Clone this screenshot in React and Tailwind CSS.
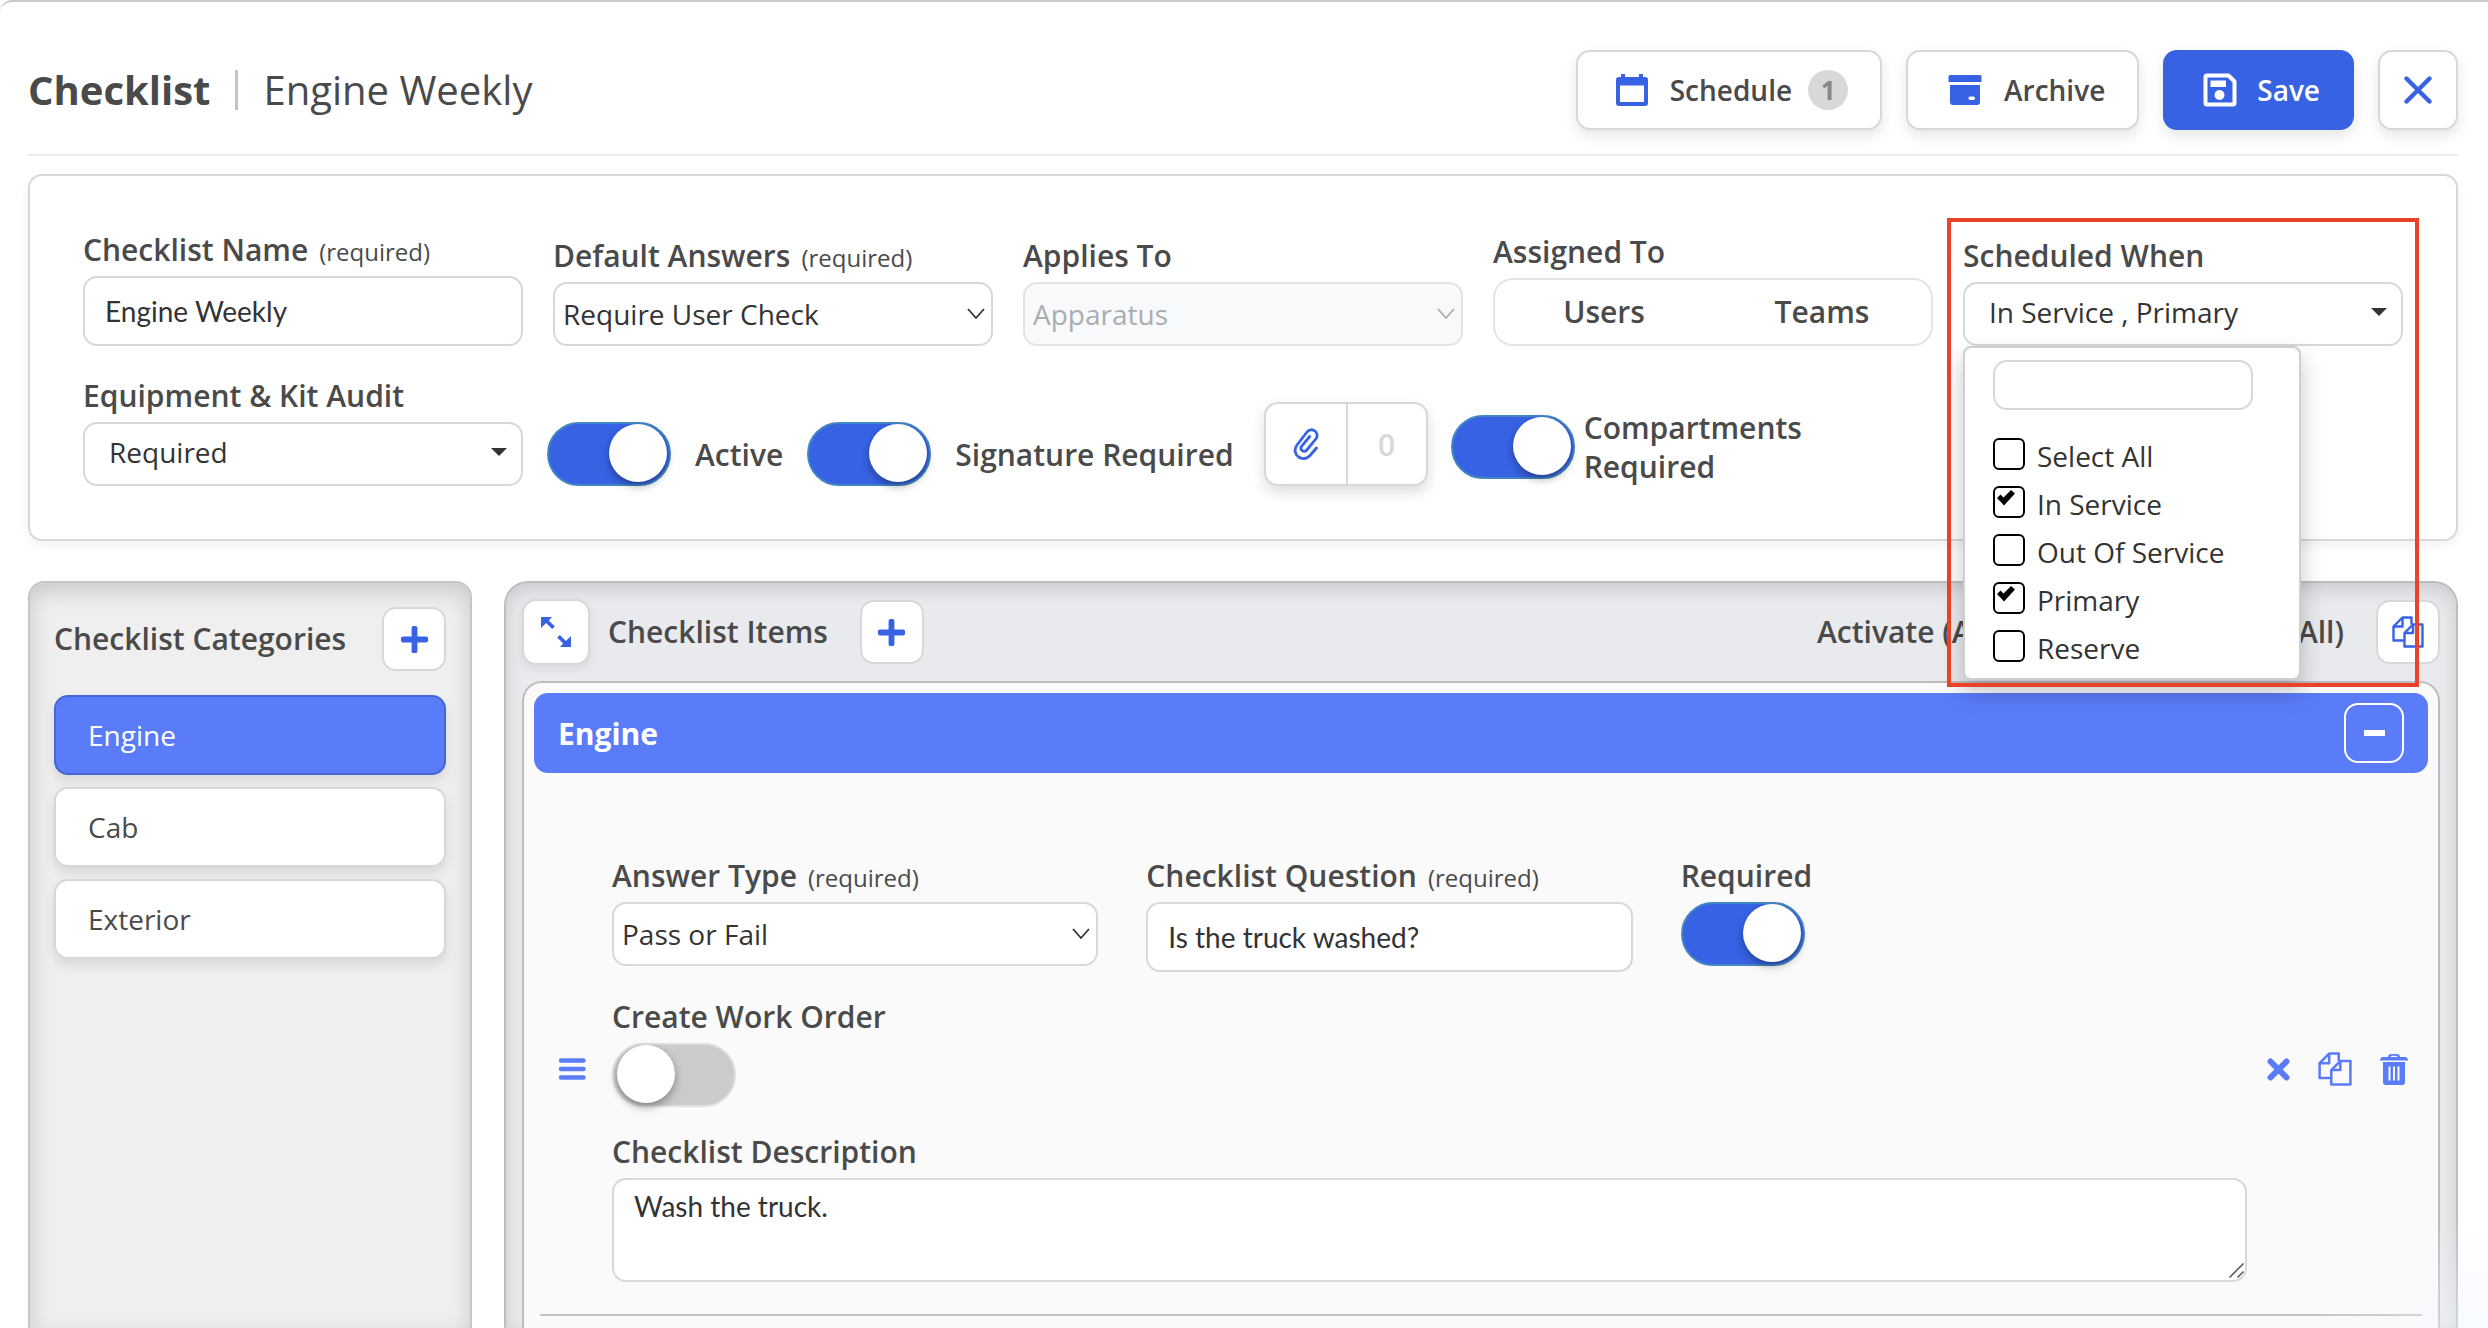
import React, { useState } from "react";
import { FaPlus } from "react-icons/fa";

const labelText = "text-[30px] leading-10 font-semibold text-[#4a4a4a]";
const control = "w-full rounded-[14px] border-2 border-[#d8d8d8] bg-white text-[#333]";

function CalendarIcon() {
  return (
    <svg viewBox="0 0 32 32" className="size-8 text-[#3762e4]" aria-hidden="true">
      <path fill="currentColor" fillRule="evenodd" d="M5 0h4v3h14V0h4v3h2a3 3 0 0 1 3 3v23a3 3 0 0 1-3 3H3a3 3 0 0 1-3-3V6a3 3 0 0 1 3-3h2zM4 11.500v16.500h24V11.500z" />
    </svg>
  );
}

function ArchiveIcon() {
  return (
    <svg viewBox="0 0 34 32" className="h-8 w-[34px] text-[#3762e4]" aria-hidden="true">
      <path fill="currentColor" d="M2 1h30a1.500 1.500 0 0 1 1.500 1.500V8H.5V2.500A1.500 1.500 0 0 1 2 1z" />
      <path fill="currentColor" d="M2 11h30v17a3 3 0 0 1-3 3H5a3 3 0 0 1-3-3z" />
      <rect x="20.500" y="22.500" width="6.500" height="3.500" rx="1.700" fill="white" />
    </svg>
  );
}

function SaveIcon() {
  return (
    <svg viewBox="0 0 34 34" className="size-[34px] text-white" fill="none" aria-hidden="true">
      <path stroke="currentColor" strokeWidth="4" strokeLinejoin="round" d="M2.500 4a1.500 1.500 0 0 1 1.500-1.500h21.500l6 6V30a1.500 1.500 0 0 1-1.500 1.500H4A1.500 1.500 0 0 1 2.500 30z" />
      <path fill="currentColor" d="M7.500 7.500h15.500v6.500H7.500z" />
      <circle cx="16.500" cy="22" r="5" fill="currentColor" />
    </svg>
  );
}

function CloseIcon() {
  return (
    <svg viewBox="0 0 28 28" className="size-7 text-[#3762e4]" fill="none" aria-hidden="true">
      <path stroke="currentColor" strokeWidth="4.400" strokeLinecap="round" d="M2.500 2.500l23 23M25.500 2.500l-23 23" />
    </svg>
  );
}

function RemoveIcon() {
  return (
    <svg viewBox="0 0 23 23" className="size-[23px]" fill="none" aria-hidden="true">
      <path stroke="currentColor" strokeWidth="6" strokeLinecap="round" d="M3.500 3.500l16 16M19.500 3.500l-16 16" />
    </svg>
  );
}

function ClipIcon() {
  return (
    <svg viewBox="0 0 26 32" className="h-8 w-[26px] text-[#3762e4]" fill="none" aria-hidden="true">
      <path
        stroke="currentColor"
        strokeWidth="2.800"
        strokeLinecap="round"
        strokeLinejoin="round"
        d="M23.500 20 17 27.500c-3 3.500-8 4-11.500 1.500-4-3-4.500-8-1.500-12L14 4c2-2.600 5.500-3 8-1s2.800 5.500.8 8l-9 11c-1.200 1.500-3.200 1.700-4.600.6s-1.600-3-.5-4.500l8-9.600"
      />
    </svg>
  );
}

function CopyIcon({ className }) {
  return (
    <svg viewBox="0 0 32 32" className={className} fill="none" stroke="currentColor" strokeWidth="2.400" strokeLinejoin="round" aria-hidden="true">
      <path d="M12 24.500H1.500V10.500L10.500 1.500H19.500v7" />
      <path d="M10.500 1.500V10.500H1.500" />
      <path d="M12.500 17 21 8.500h9.500v22h-18z" />
      <path d="M21 8.500V17h-8.500" />
    </svg>
  );
}

function TrashIcon() {
  return (
    <svg viewBox="0 0 28 32" className="h-8 w-7" aria-hidden="true">
      <path fill="currentColor" fillRule="evenodd" d="M8 4A3 3 0 0 1 10.500 1h7A3 3 0 0 1 20 4h5.500q2.500.5 2.500 3.500H0Q0 4.500 2.500 4zm2.500 0h7l-.8-1.200h-5.400zM3 9h22v20a3 3 0 0 1-3 3H6a3 3 0 0 1-3-3zM8.500 13.500v14h2v-14zm4.500 0v14h2v-14zm4.500 0v14h2v-14z" />
    </svg>
  );
}

function ExpandIcon() {
  return (
    <svg viewBox="0 0 32 32" className="size-8 text-[#3762e4]" aria-hidden="true">
      <path fill="currentColor" d="M1 1h11L8.800 4.400l6 6-2.600 2.600-6.100-6L1 12zM31 31H20l3.200-3.400-6-6 2.600-2.600 6.100 6L31 20z" />
    </svg>
  );
}

function MenuIcon() {
  return (
    <svg viewBox="0 0 28 22" className="h-[22px] w-7" fill="none" aria-hidden="true">
      <path stroke="currentColor" strokeWidth="4.400" strokeLinecap="round" d="M3 2.500h22.500M3 11h22.500M3 19.500h22.500" />
    </svg>
  );
}

function Chevron() {
  return (
    <svg viewBox="0 0 18 14" className="pointer-events-none absolute top-[25px] right-2 h-3.5 w-[18px]" fill="none" aria-hidden="true">
      <path stroke="currentColor" strokeWidth="1.800" d="M1 2l8 9 8-9" />
    </svg>
  );
}

function Caret() {
  return (
    <svg viewBox="0 0 16 8" className="pointer-events-none absolute top-[26px] right-4 h-2 w-4 text-[#333]" aria-hidden="true">
      <path fill="currentColor" d="M0 0h16L8 8z" />
    </svg>
  );
}

function FieldLabel({ htmlFor, required, children }) {
  return (
    <label htmlFor={htmlFor} className={labelText + " mb-1.5 block whitespace-nowrap"}>
      {children}
      {required && <span className="ml-[11px] text-2xl font-normal">(required)</span>}
    </label>
  );
}

function Select({ id, value, disabled }) {
  return (
    <div className={disabled ? "relative text-[#a9adb1]" : "relative text-[#333]"}>
      <select
        id={id}
        disabled={disabled}
        className="h-16 w-full appearance-none rounded-[14px] border-2 border-[#d8d8d8] bg-white pl-2 text-[28px] text-inherit opacity-100 disabled:border-[#e3e3e3] disabled:bg-[#f8f9fb]"
      >
        <option>{value}</option>
      </select>
      <Chevron />
    </div>
  );
}

function Toggle({ id, defaultChecked }) {
  return (
    <input
      id={id}
      type="checkbox"
      role="switch"
      defaultChecked={defaultChecked}
      className="h-16 w-[124px] shrink-0 appearance-none rounded-full border-2 border-[#dedede] bg-[#cbcbcb] before:block before:size-[58px] before:translate-x-[3px] before:rounded-full before:bg-white before:shadow-[0_4px_8px_rgba(0,0,0,0.35)] checked:border-[#4286c5] checked:bg-[#3762e4] checked:before:translate-x-[60px]"
    />
  );
}

const whiteButton =
  "flex shrink-0 items-center justify-center rounded-[14px] border-2 border-[#d8d8d8] bg-white";
const headerShadow = "shadow-[0_6px_14px_rgba(0,0,0,0.10)]";

function Header() {
  return (
    <header className="flex items-center justify-between border-b-2 border-[#ebebeb] pt-12 pb-6">
      <h1 className="flex items-center text-[40px] leading-[54px] text-[#4a4a4a]">
        <span className="font-bold">Checklist</span>
        <span className="mx-[25px] h-10 w-[3px] bg-[#c4c4c4]" />
        <span>Engine Weekly</span>
      </h1>
      <div className="flex gap-6">
        <button className={whiteButton + " " + headerShadow + " h-20 pr-8 pl-[38px] text-[28px] font-semibold text-[#4a4a4a]"}>
          <CalendarIcon />
          <span className="ml-[22px]">Schedule</span>
          <span className="ml-4 flex size-10 items-center justify-center rounded-full bg-[#d8d8d8] text-[26px] font-bold text-[#888]">1</span>
        </button>
        <button className={whiteButton + " " + headerShadow + " h-20 pr-8 pl-10 text-[28px] font-semibold text-[#4a4a4a]"}>
          <ArchiveIcon />
          <span className="ml-[22px]">Archive</span>
        </button>
        <button className={headerShadow + " flex h-20 items-center rounded-[14px] bg-[#3762e4] pr-[34px] pl-10 text-[28px] font-semibold text-white"}>
          <SaveIcon />
          <span className="ml-5">Save</span>
        </button>
        <button aria-label="Close" className={whiteButton + " " + headerShadow + " size-20"}>
          <CloseIcon />
        </button>
      </div>
    </header>
  );
}

const statuses = [
  ["Select All", false],
  ["In Service", true],
  ["Out Of Service", false],
  ["Primary", true],
  ["Reserve", false],
];

function StatusMenu() {
  return (
    <div className="absolute top-full left-0 z-20 w-[338px] rounded-lg border-2 border-[#cfcfcf] bg-white px-7 pt-3 pb-2 shadow-[0_12px_24px_rgba(0,0,0,0.22)]">
      <input type="text" aria-label="Filter statuses" className="mb-5 block h-[50px] w-[260px] rounded-[14px] border-2 border-[#d8d8d8] px-3 text-[28px]" />
      {statuses.map(([name, checked]) => (
        <label key={name} className="flex h-12 items-center text-[28px] text-[#333]">
          <span className="relative mr-3 block size-8">
            <input type="checkbox" defaultChecked={checked} className="peer block size-8 appearance-none rounded-md border-2 border-black bg-white" />
            <svg viewBox="0 0 18 16" className="absolute top-1 left-1 hidden h-4 w-[18px] peer-checked:block" aria-hidden="true">
              <path fill="black" d="M0 8l3.500-3.500 3 3L14 0l4 3.500L7 15.500z" />
            </svg>
          </span>
          <span className="pt-1">{name}</span>
        </label>
      ))}
    </div>
  );
}

function Settings() {
  return (
    <section className="mt-[18px] rounded-[14px] border-2 border-[#d8d8d8] px-[53px] pt-[54px] pb-[53px] shadow-[0_4px_12px_rgba(0,0,0,0.06)]">
      <div className="grid grid-cols-5 items-end gap-[30px]">
        <div>
          <FieldLabel htmlFor="name" required>Checklist Name</FieldLabel>
          <input id="name" defaultValue="Engine Weekly" className={control + " h-[70px] px-5 font-['Lato',sans-serif] text-[28px]"} />
        </div>
        <div>
          <FieldLabel htmlFor="answers" required>Default Answers</FieldLabel>
          <Select id="answers" value="Require User Check" />
        </div>
        <div>
          <FieldLabel htmlFor="applies">Applies To</FieldLabel>
          <Select id="applies" value="Apparatus" disabled />
        </div>
        <div>
          <div className={labelText + " mb-1.5"}>Assigned To</div>
          <div className="grid h-[68px] grid-cols-2 rounded-[20px] border-2 border-[#e4e4e4] pb-0.5 text-[30px] font-semibold text-[#4a4a4a]">
            <button>Users</button>
            <button>Teams</button>
          </div>
        </div>
        <div className="relative">
          <FieldLabel htmlFor="when">Scheduled When</FieldLabel>
          <div className="relative">
            <button id="when" className={control + " h-16 pb-1 pl-6 text-left text-[28px]"}>In Service , Primary</button>
            <Caret />
            <StatusMenu />
          </div>
          <div className="pointer-events-none absolute -top-[18px] -right-4 z-30 h-[469px] w-[472px] border-4 border-[#ea4228]" />
        </div>
      </div>
      <div className="mt-[30px] flex items-end">
        <div className="w-[440px]">
          <FieldLabel htmlFor="audit">Equipment &amp; Kit Audit</FieldLabel>
          <div className="relative">
            <select id="audit" className={control + " h-16 appearance-none pb-1 pl-6 text-[28px]"}>
              <option>Required</option>
            </select>
            <Caret />
          </div>
        </div>
        <div className="ml-6 flex items-center gap-6">
          <Toggle id="active" defaultChecked />
          <label htmlFor="active" className={labelText + " pt-0.5"}>Active</label>
          <Toggle id="signature" defaultChecked />
          <label htmlFor="signature" className={labelText + " pt-0.5"}>Signature Required</label>
        </div>
        <div className="ml-[30px] flex h-[84px] rounded-[14px] border-2 border-[#d8d8d8] bg-white shadow-[0_6px_14px_rgba(0,0,0,0.14)]">
          <button aria-label="Attachments" className="flex w-[82px] items-center justify-center border-r-2 border-[#d8d8d8]">
            <ClipIcon />
          </button>
          <span className="flex w-[78px] items-center justify-center text-[30px] font-semibold text-[#d8d8d8]">0</span>
        </div>
        <div className="ml-[23px] flex items-center gap-[9px]">
          <Toggle id="compartments" defaultChecked />
          <label htmlFor="compartments" className="w-[240px] text-[30px] leading-[39px] font-semibold text-[#4a4a4a]">Compartments Required</label>
        </div>
      </div>
    </section>
  );
}

function Categories() {
  const [current, setCurrent] = useState("Engine");
  return (
    <aside className="w-[444px] shrink-0 rounded-t-2xl border-2 border-b-0 border-[#c6c6c6] bg-[#efefef] px-6 pt-6 shadow-[inset_0_8px_22px_rgba(0,0,0,0.16)]">
      <div className="flex items-center justify-between">
        <h2 className={labelText}>Checklist Categories</h2>
        <button aria-label="Add category" className={whiteButton + " size-16 text-[#3762e4]"}>
          <FaPlus size={31} />
        </button>
      </div>
      <div className="mt-6 grid gap-3">
        {["Engine", "Cab", "Exterior"].map((name) => (
          <button
            key={name}
            onClick={() => setCurrent(name)}
            className={
              name === current
                ? "h-20 rounded-[14px] border-2 border-[#4567d5] bg-[#5a7cf8] pl-8 text-left text-[28px] text-white shadow-[0_6px_12px_rgba(0,0,0,0.10)]"
                : "h-20 rounded-[14px] border-2 border-[#d8d8d8] bg-white pl-8 text-left text-[28px] text-[#4a4a4a] shadow-[0_6px_12px_rgba(0,0,0,0.10)]"
            }
          >
            {name}
          </button>
        ))}
      </div>
    </aside>
  );
}

function Question() {
  return (
    <div className="mx-1.5 flex items-center border-b-2 border-[#c4c4c4] pt-[83px] pr-[14px] pb-8 pl-[18px] text-[#5a7cf8]">
      <button aria-label="Reorder" className="mr-[26px]">
        <MenuIcon />
      </button>
      <div className="grid flex-1 gap-[25px]">
        <div className="grid grid-cols-3 gap-12 pr-20">
          <div>
            <FieldLabel htmlFor="type" required>Answer Type</FieldLabel>
            <Select id="type" value="Pass or Fail" />
          </div>
          <div>
            <FieldLabel htmlFor="question" required>Checklist Question</FieldLabel>
            <input id="question" defaultValue="Is the truck washed?" className={control + " h-[70px] px-5 font-['Lato',sans-serif] text-[28px]"} />
          </div>
          <div>
            <FieldLabel htmlFor="required">Required</FieldLabel>
            <Toggle id="required" defaultChecked />
          </div>
        </div>
        <div className="flex flex-col">
          <FieldLabel htmlFor="order">Create Work Order</FieldLabel>
          <Toggle id="order" />
        </div>
        <div>
          <FieldLabel htmlFor="description">Checklist Description</FieldLabel>
          <div className="relative">
            <textarea id="description" defaultValue="Wash the truck." className={control + " block h-[104px] resize-none px-5 py-1.5 font-['Lato',sans-serif] text-[28px] leading-10"} />
            <svg viewBox="0 0 15 15" className="pointer-events-none absolute right-[3px] bottom-1 size-[15px] text-[#555]" fill="none" aria-hidden="true">
              <path stroke="currentColor" strokeWidth="1.500" d="M.5 14.500l14-14M8.500 14.500l6-6" />
            </svg>
          </div>
        </div>
      </div>
      <div className="ml-5 flex items-center gap-7">
        <button aria-label="Remove"><RemoveIcon /></button>
        <button aria-label="Duplicate"><CopyIcon className="size-[34px]" /></button>
        <button aria-label="Delete"><TrashIcon /></button>
      </div>
    </div>
  );
}

function Items() {
  return (
    <main className="min-w-0 flex-1 rounded-t-3xl border-2 border-b-0 border-[#bdbdbd] bg-[#e9eaee] px-4 pt-4 shadow-[inset_0_6px_18px_rgba(0,0,0,0.14)]">
      <div className="flex items-center">
        <button aria-label="Expand" className={whiteButton + " h-[66px] w-[68px] shadow-[0_4px_10px_rgba(0,0,0,0.08)]"}>
          <ExpandIcon />
        </button>
        <h2 className={labelText + " ml-[18px]"}>Checklist Items</h2>
        <button aria-label="Add item" className={whiteButton + " ml-8 size-16 text-[#3762e4]"}>
          <FaPlus size={31} />
        </button>
        <span className={labelText + " ml-auto"}>Activate (All)</span>
        <span className={labelText + " ml-[170px]"}>Require (All)</span>
        <button aria-label="Copy items" className={whiteButton + " ml-8 size-16 text-[#3762e4]"}>
          <CopyIcon className="size-8" />
        </button>
      </div>
      <div className="mt-4 h-[648px] rounded-t-[20px] border-2 border-b-0 border-[#bdbdbd] bg-[#fafafa] px-2.5 pt-2.5">
        <div className="flex h-20 items-center justify-between rounded-[14px] bg-[#5a7cf8] pr-6 pl-6 text-white">
          <h3 className="text-[30px] font-bold">Engine</h3>
          <button aria-label="Collapse" className="flex size-[60px] items-center justify-center rounded-[14px] border-2 border-white">
            <span className="h-1.5 w-[21px] bg-white" />
          </button>
        </div>
        <Question />
      </div>
    </main>
  );
}

export default function App() {
  return (
    <div className="relative h-screen overflow-hidden rounded-tl-xl border-t-2 border-[#cbcbcb] bg-white px-7 pr-[30px] font-['Open_Sans',sans-serif]">
      <Header />
      <Settings />
      <div className="mt-10 flex gap-8">
        <Categories />
        <Items />
      </div>
      <div className="pointer-events-none absolute right-0 bottom-0 h-28 w-44 bg-[radial-gradient(ellipse_at_bottom_right,rgba(240,246,255,0.5),transparent_70%)]" />
    </div>
  );
}
